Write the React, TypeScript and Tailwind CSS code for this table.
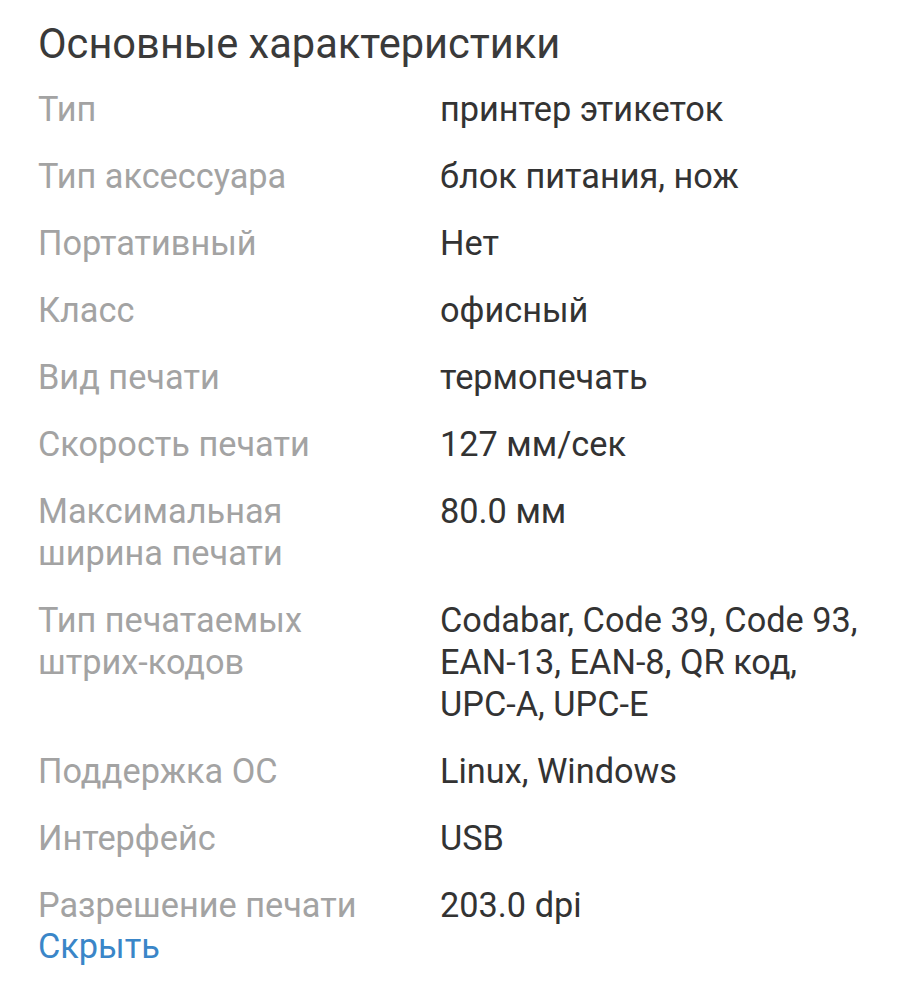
import React from 'react';

const specs: { label: string; value: string }[] = [
  { label: 'Тип', value: 'принтер этикеток' },
  { label: 'Тип аксессуара', value: 'блок питания, нож' },
  { label: 'Портативный', value: 'Нет' },
  { label: 'Класс', value: 'офисный' },
  { label: 'Вид печати', value: 'термопечать' },
  { label: 'Скорость печати', value: '127 мм/сек' },
  { label: 'Максимальная ширина печати', value: '80.0 мм' },
  { label: 'Тип печатаемых штрих\u2011кодов', value: 'Codabar, Code 39, Code 93, EAN\u201113, EAN\u20118, QR код, UPC\u2011A, UPC\u2011E' },
  { label: 'Поддержка ОС', value: 'Linux, Windows' },
  { label: 'Интерфейс', value: 'USB' },
  { label: 'Разрешение печати', value: '203.0 dpi' },
];

export default function App() {
  return (
    <div className="min-h-[1000px] bg-white pl-[38px] pt-[18px] font-['Roboto',sans-serif]">
      <h2 className="text-[41.6px] leading-[52px] text-[#3a3a3a]">Основные характеристики</h2>

      <div className="mt-[18px] flex flex-col gap-[25px]">
        {specs.map(spec => (
          <div key={spec.label} className="grid grid-cols-[402px_430px] text-[34.3px] leading-[42px]">
            <div className="pr-[50px] text-[#a3a3a3]">{spec.label}</div>
            <div className="text-[#333333]">{spec.value}</div>
          </div>
        ))}
      </div>

      <button className="-mt-[1px] text-[34.3px] leading-[42px] text-[#3a86c8]">Скрыть</button>
    </div>
  );
}
